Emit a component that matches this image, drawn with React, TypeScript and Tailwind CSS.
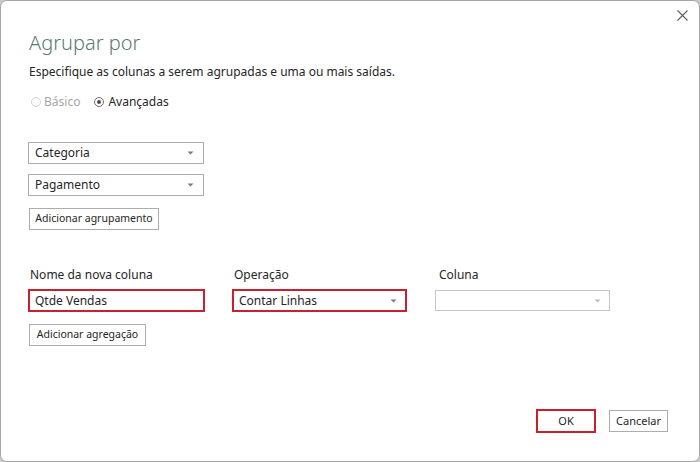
import React from "react";

const font = { fontFamily: '"Segoe UI", "Noto Sans", "Open Sans", sans-serif' };

function Caret({ color = "#7a7a7a" }: { color?: string }) {
  return (
    <svg width="7" height="4" viewBox="0 0 7 4" className="shrink-0">
      <path d="M0.5 0.5 L6.5 0.5 L3.5 3.5 Z" fill={color} />
    </svg>
  );
}

function Select({ label, className = "" }: { label: string; className?: string }) {
  return (
    <div className={`flex items-center justify-between border border-[#ababab] bg-white pl-[6px] pr-[9px] text-[12px] text-[#262626] ${className}`}>
      <span>{label}</span>
      <Caret />
    </div>
  );
}

function Btn({ children, className = "" }: { children: React.ReactNode; className?: string }) {
  return (
    <div className={`flex items-center justify-center whitespace-nowrap border border-[#adadad] bg-white text-[10.5px] text-[#262626] ${className}`}>
      {children}
    </div>
  );
}

export default function App() {
  return (
    <div className="h-[462px] w-[700px] bg-[#c9c9c9] overflow-hidden" style={font}>
      <div className="relative h-[462px] w-[700px] rounded-[7px] border border-[#a7a7a7] bg-white">
        <div className="absolute right-[9px] top-[6px] flex h-[16px] w-[16px] items-center justify-center">
          <svg width="11" height="11" viewBox="0 0 11 11">
            <path d="M0.5 0.5 L10.5 10.5 M10.5 0.5 L0.5 10.5" stroke="#5f5f5f" strokeWidth="1.1" />
          </svg>
        </div>
        <div className="flex flex-col pl-[27px] pt-[29px]">
          <div className="ml-[1px] text-[20px] font-light leading-[26px] text-[#5b7a71]">Agrupar por</div>
          <div className="ml-[1px] mt-[7px] text-[12px] leading-[17px] text-[#262626]">
            Especifique as colunas a serem agrupadas e uma ou mais saídas.
          </div>
          <div className="mt-[13px] flex items-center text-[12px] leading-[17px]">
            <span className="ml-[3px] h-[10px] w-[10px] rounded-full border border-[#d4d4d4]" />
            <span className="ml-[3px] text-[#a6a6a6]">Básico</span>
            <span className="ml-[14px] flex h-[10px] w-[10px] items-center justify-center rounded-full border border-[#6e6e6e]">
              <span className="h-[4px] w-[4px] rounded-full bg-[#4d4d4d]" />
            </span>
            <span className="ml-[4px] text-[#262626]">Avançadas</span>
          </div>
          <Select label="Categoria" className="mt-[32px] h-[22px] w-[176px]" />
          <Select label="Pagamento" className="mt-[10px] h-[22px] w-[176px]" />
          <Btn className="ml-[1px] mt-[12px] h-[22px] w-[130px]">Adicionar agrupamento</Btn>

          <div className="mt-[36px] flex text-[12px] leading-[17px] text-[#262626]">
            <span className="ml-[2px] w-[204px]">Nome da nova coluna</span>
            <span className="w-[205px]">Operação</span>
            <span>Coluna</span>
          </div>
          <div className="mt-[6px] flex items-center">
            <div className="flex h-[23px] w-[177px] items-center border-2 border-[#c8202f] pl-[5px] text-[12px] text-[#262626]">
              Qtde Vendas
            </div>
            <div className="ml-[27px] flex h-[23px] w-[175px] items-center justify-between border-2 border-[#c8202f] pl-[5px] pr-[8px] text-[12px] text-[#262626]">
              <span>Contar Linhas</span>
              <Caret />
            </div>
            <div className="ml-[28px] flex h-[21px] w-[175px] items-center justify-end border border-[#c6c6c6] pr-[8px]">
              <Caret color="#bdbdbd" />
            </div>
          </div>
          <Btn className="ml-[1px] mt-[12px] h-[22px] w-[117px]">Adicionar agregação</Btn>
        </div>
        <div className="absolute bottom-[28px] right-[31px] flex items-center">
          <div className="flex h-[24px] w-[60px] items-center justify-center border-2 border-[#c8202f] bg-white text-[11px] text-[#262626]">
            OK
          </div>
          <Btn className="ml-[13px] h-[22px] w-[59px] text-[11px]">Cancelar</Btn>
        </div>
      </div>
    </div>
  );
}
